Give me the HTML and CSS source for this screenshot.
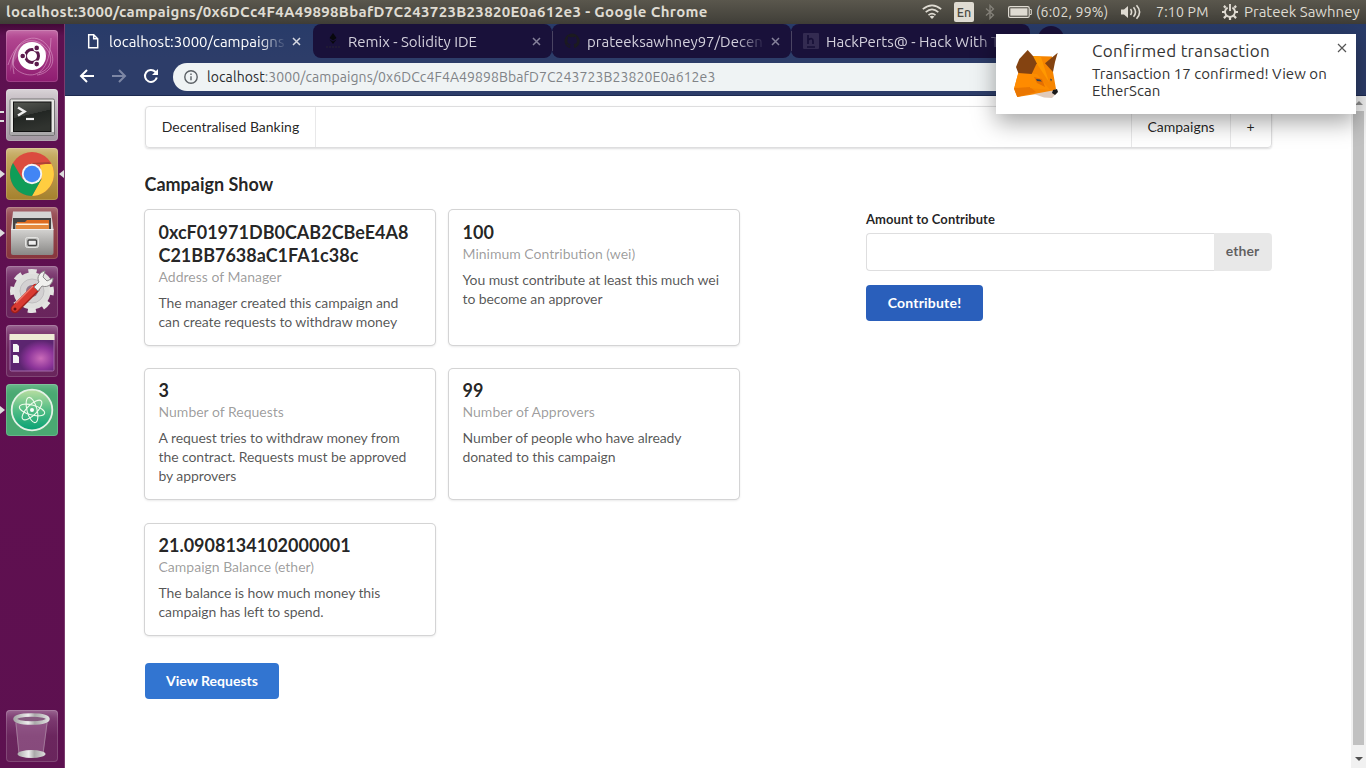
FILE: index.html
```html
<!DOCTYPE html>
<html lang="en">
<head>
<meta charset="utf-8">
<title>Campaign Show</title>
<link rel="stylesheet" href="styles.css">
</head>
<body>
<div class="desktop">
  <header class="panel">
    <span class="window-title">localhost:3000/campaigns/0x6DCc4F4A49898BbafD7C243723B23820E0a612e3 - Google Chrome</span>
    <div class="indicators">
      <svg class="wifi" width="20" height="16" viewBox="0 0 20 16" fill="none" stroke="#dfdbd2" stroke-width="1.6"><path d="M.8 5.2Q10-2.6 19.2 5.2M3.7 8.2Q10 2.6 16.3 8.2M6.5 11.1Q10 8 13.5 11.1"/><path d="M7.6 12.6Q10 10.8 12.4 12.6L10 15z" fill="#dfdbd2" stroke="none"/></svg>
      <span class="lang">En</span>
      <svg class="bt" width="10" height="16" viewBox="0 0 10 16" fill="none" stroke="#85827a" stroke-width="1.3"><path d="M1 4.5 8.5 11 5 14.5V1.5L8.5 5 1 11.5"/></svg>
      <svg class="battery" width="24" height="12" viewBox="0 0 24 12"><rect x=".6" y=".6" width="20.6" height="10.8" rx="1.5" fill="none" stroke="#dfdbd2" stroke-width="1.2"/><rect x="2.3" y="2.3" width="17.2" height="7.4" fill="#dfdbd2"/><path d="M22 3.5h1.3v5H22" fill="none" stroke="#dfdbd2"/></svg>
      <span class="charge">(6:02, 99%)</span>
      <svg class="sound" width="20" height="16" viewBox="0 0 20 16"><path d="M0 5.5h3L7 2v12l-4-3.500H0z" fill="#dfdbd2"/><path d="M9.500 5q2.200 3 0 6M12.500 3.200q4 4.800 0 9.600M15.500 1.200q6.200 6.800 0 13.600" fill="none" stroke="#dfdbd2" stroke-width="1.600"/></svg>
      <span class="clock">7:10 PM</span>
      <svg class="gear" width="16" height="16" viewBox="0 0 16 16" fill="none" stroke="#dfdbd2"><path d="M5.600 3.600a5 5 0 1 0 4.800 0" stroke-width="1.900"/><path d="M8 0v7" stroke-width="1.900"/><path d="M3.600 3.600 1.900 1.900M12.400 3.600l1.700-1.700M3 8H0M13 8h3M4.500 11.500l-2.600 2.600M11.500 11.500l2.600 2.600M8 13v3" stroke-width="2.200"/></svg>
      <span class="user">Prateek Sawhney</span>
    </div>
  </header>

  <div class="workspace">
    <aside class="launcher">
      <div class="tile tile-dash"><svg width="52" height="52" viewBox="0 0 52 52"><g fill="none" stroke="#e0a8cd" stroke-opacity=".55"><path d="M8 44C2 14 24 4 37 15s8 25-4 28"/><path d="M45 8C44 42 30 49 16 43S6 25 14 14"/><path d="M2 35C12 4 33 2 43 18s-2 26-12 27"/></g><path d="M4 42C4 10 38 0 42 27 30 5 12 18 4 42" fill="#fff" opacity=".15"/><circle cx="26" cy="26" r="14" fill="#fff"/><circle cx="26" cy="26" r="6.500" fill="none" stroke="#5b1a4c" stroke-width="3"/><g stroke="#fff" stroke-width="1.200"><circle cx="16.700" cy="26" r="2.900" fill="#5b1a4c"/><circle cx="30.700" cy="17.900" r="2.900" fill="#5b1a4c"/><circle cx="30.700" cy="34.100" r="2.900" fill="#5b1a4c"/></g></svg></div>
      <div class="tile tile-terminal running-two"><svg width="52" height="52" viewBox="0 0 52 52"><defs><linearGradient id="tg" x2=".3" y2="1"><stop stop-color="#555852"/><stop offset=".5" stop-color="#363936"/><stop offset=".51" stop-color="#222623"/><stop offset="1" stop-color="#30332f"/></linearGradient></defs><rect x="4" y="10" width="44.500" height="36.500" rx="1.500" fill="#e7e7e4" stroke="#747274"/><path d="M4.500 43h43.500v3H4.500z" fill="#aaa8aa"/><rect x="7.500" y="13" width="37.500" height="29.500" fill="url(#tg)" stroke="#111"/><path d="m12 18.500 6.500 4-6.500 4" fill="none" stroke="#eee" stroke-width="2.500"/><path d="M20 30h8" stroke="#eee" stroke-width="2.200"/></svg></div>
      <div class="tile tile-chrome running focused"><svg width="52" height="52" viewBox="0 0 52 52"><circle cx="26" cy="26" r="22" fill="#db4c3f"/><path d="M45 15A22 22 0 0 1 26 48L35.500 31 34 17z" fill="#ffcd40"/><path d="M7 15A22 22 0 0 0 26 48L35.500 31 26 36 16.500 31z" fill="#0f9d58"/><path d="M26 16H45.600L43 14 26 15z" fill="#ac4336"/><circle cx="26" cy="26" r="10.200" fill="#f4f4f4"/><circle cx="26" cy="26" r="8.300" fill="#4285f4"/></svg></div>
      <div class="tile tile-files running"><svg width="52" height="52" viewBox="0 0 52 52"><defs><linearGradient id="fg" x2="0" y2="1"><stop stop-color="#d3d2d0"/><stop offset="1" stop-color="#898886"/></linearGradient></defs><path d="M7 4.500h38l2.500 18H5z" fill="#d5d4d3"/><rect x="7" y="11" width="38" height="17" fill="#444"/><path d="M11 15h8l2-2h22v10H10z" fill="#df6c20"/><path d="M9.500 16.500h33v8h-33z" fill="#fff3df"/><path d="M10 18h33v7H10z" fill="#e58a3e"/><path d="M5 22.500h42.500V46q0 2-2 2H7q-2 0-2-2z" fill="url(#fg)"/><path d="M5 22.500h42.500" stroke="#eee"/><rect x="19.500" y="30.500" width="13" height="10" rx="2" fill="#c4c4c2" stroke="#e5e5e3"/><rect x="22" y="33" width="8.500" height="5.500" rx="1" fill="#eee" stroke="#444" stroke-width="1.300"/></svg></div>
      <div class="tile tile-settings"><svg width="52" height="52" viewBox="0 0 52 52"><circle cx="26" cy="25" r="14" fill="none" stroke="#dededc" stroke-width="9"/><circle cx="26" cy="25" r="19.500" fill="none" stroke="#e3e3e1" stroke-width="5" stroke-dasharray="8 7.315" transform="rotate(-12 26 25)"/><circle cx="26" cy="25" r="12" fill="#d3d1d2" stroke="#c0bec0"/><circle cx="26" cy="25" r="6" fill="#8d7187"/><path d="M30 22 9 43" stroke="#9f1f1a" stroke-width="8.500" stroke-linecap="round"/><path d="M30 21.500 9 42.500" stroke="#d93a31" stroke-width="6.500" stroke-linecap="round"/><path d="M27 20 10 37" stroke="#ef766b" stroke-width="1.500"/><path d="m28 21 5-5c-3-5 1-10 6-11l-2 6 4 4 6-3c0 6-5 10-11 8l-4 5z" fill="#f1f1ef" stroke="#8b898a"/><circle cx="9" cy="43" r="1.500" fill="#611"/></svg></div>
      <div class="tile tile-workspace"><svg width="52" height="52" viewBox="0 0 52 52"><defs><radialGradient id="wg" cx=".7" cy=".65"><stop stop-color="#ca6bb9"/><stop offset=".6" stop-color="#8c3499"/><stop offset="1" stop-color="#5c2570"/></radialGradient></defs><rect x="4" y="10" width="44" height="36" rx="1.500" fill="url(#wg)" stroke="#a46ca9"/><path d="M3.500 9h45v6h-45z" fill="#eeebd5"/><path d="M7 19h4l2 2v6H7zM7 30h4l2 2v6H7z" fill="#f5f5f5"/></svg></div>
      <div class="tile tile-atom running"><svg width="52" height="52" viewBox="0 0 52 52"><defs><linearGradient id="ag" x2="0" y2="1"><stop stop-color="#b9dea1"/><stop offset=".5" stop-color="#53bd85"/><stop offset="1" stop-color="#06a174"/></linearGradient></defs><circle cx="26" cy="26" r="20.300" fill="url(#ag)" stroke="#e4f2e6" stroke-width="1.800"/><g fill="none" stroke="#effbec" stroke-width="1.100"><ellipse cx="26" cy="26" rx="13" ry="5" transform="rotate(15 26 26)"/><ellipse cx="26" cy="26" rx="13" ry="5" transform="rotate(75 26 26)"/><ellipse cx="26" cy="26" rx="13" ry="5" transform="rotate(135 26 26)"/></g><circle cx="26" cy="26" r="2" fill="#fff"/></svg></div>
      <div class="tile tile-trash"><svg width="52" height="52" viewBox="0 0 52 52"><defs><linearGradient id="bg" x2="1" y2="0"><stop stop-color="#aaa"/><stop offset=".4" stop-color="#eee"/><stop offset=".6" stop-color="#aaa"/><stop offset="1" stop-color="#ddd"/></linearGradient></defs><path d="M9 10 13 45Q26 50 37 45L42 10z" fill="#b889b1" opacity=".38"/><path d="M10 13 13 44M41 13l-4 31" stroke="#a985a2" stroke-width=".8"/><ellipse cx="25.500" cy="44" rx="14" ry="4" fill="url(#bg)"/><ellipse cx="25.500" cy="9" rx="16.500" ry="4" fill="#865b7f" stroke="url(#bg)" stroke-width="3.500"/></svg></div>
    </aside>

    <section class="browser">
      <div class="tabstrip">
        <div class="tab tab-active"><svg class="favicon" width="20" height="16" viewBox="0 0 20 16" fill="none" stroke="#fff" stroke-width="1.500"><path d="M5.700 1.700h5l4 4v9h-9zM10.700 1.700v4h4"/></svg><span class="tab-title">localhost:3000/campaigns</span><svg class="close" width="9" height="9" viewBox="0 0 9 9"><path d="m1 1 7 7m0-7-7 7"/></svg></div>
        <div class="tab"><svg class="favicon" width="16" height="16" viewBox="0 0 16 16" fill="#08080d"><path d="m8 0 3.500 5L8 7.500 4.500 5zM8 11 4.500 6.500 8 8.500l3.500-2z"/><path d="M1 14h14" stroke="#292431" stroke-dasharray="2 1"/></svg><span class="tab-title">Remix - Solidity IDE</span><svg class="close" width="9" height="9" viewBox="0 0 9 9"><path d="m1 1 7 7m0-7-7 7"/></svg></div>
        <div class="tab"><svg class="favicon" width="16" height="16" viewBox="0 0 16 16"><path fill="#1b1a20" fill-rule="evenodd" d="M8 .500a7.500 7.500 0 0 0-2.400 14.600c.4.100.5-.2.500-.4v-1.400c-2.100.5-2.500-.9-2.500-.9-.3-.9-.8-1.100-.8-1.100-.7-.5 0-.5 0-.5.800.1 1.200.8 1.200.8.700 1.200 1.800.8 2.200.6.100-.5.300-.8.500-1-1.700-.2-3.400-.8-3.400-3.700 0-.8.300-1.500.8-2-.1-.2-.300-1 .1-2 0 0 .6-.2 2.100.8a7 7 0 0 1 3.800 0c1.400-1 2-.8 2-.8.400 1 .200 1.800.1 2 .5.500.8 1.200.8 2 0 2.900-1.800 3.500-3.400 3.700.3.200.5.700.5 1.400v2.100c0 .2.100.5.500.4A7.500 7.500 0 0 0 8 .500z"/></svg><span class="tab-title">prateeksawhney97/Decen</span><svg class="close" width="9" height="9" viewBox="0 0 9 9"><path d="m1 1 7 7m0-7-7 7"/></svg></div>
        <div class="tab"><svg class="favicon" width="16" height="16" viewBox="0 0 16 16"><rect width="16" height="16" rx="1" fill="#332b51"/><path d="M5 2v9m0-4q5-3 5 1v3M4 14h8" fill="none" stroke="#171037" stroke-width="1.700"/></svg><span class="tab-title">HackPerts@ - Hack With T</span></div>
        <i class="newtab"></i>
      </div>
      <div class="toolbar">
        <svg class="nav-icon" width="16" height="16" viewBox="0 0 16 16"><path d="M15 8H2m6-6L2 8l6 6" stroke="#fff"/></svg>
        <svg class="nav-icon" width="16" height="16" viewBox="0 0 16 16"><path d="M1 8h13M8 2l6 6-6 6" stroke="#7d87a5"/></svg>
        <svg class="nav-icon" width="16" height="16" viewBox="0 0 16 16"><path d="M13.800 9.500A6 6 0 1 1 12.300 3.700L14 5.500" stroke="#fff"/><path d="M15 1v6H9z" fill="#fff"/></svg>
        <div class="omnibox"><svg width="14" height="14" viewBox="0 0 14 14" fill="none" stroke="#5b6065" stroke-width="1.400"><circle cx="7" cy="7" r="6.200"/><path d="M7 6.200v4M7 3.500v1.500"/></svg><span class="url"><b>localhost</b>:3000/campaigns/0x6DCc4F4A49898BbafD7C243723B23820E0a612e3</span></div>
      </div>

      <div class="viewport">
        <main class="page">
          <nav class="menu"><a class="item brand">Decentralised Banking</a><a class="item campaigns">Campaigns</a><a class="item plus">+</a></nav>
          <h3 class="heading">Campaign Show</h3>
          <div class="columns">
            <div class="cards">
              <article class="card first"><h4>0xcF01971DB0CAB2CBeE4A8<br>C21BB7638aC1FA1c38c</h4><div class="meta">Address of Manager</div><p>The manager created this campaign and can create requests to withdraw money</p></article>
              <article class="card first"><h4>100</h4><div class="meta">Minimum Contribution (wei)</div><p>You must contribute at least this much wei to become an approver</p></article>
              <article class="card second"><h4>3</h4><div class="meta">Number of Requests</div><p>A request tries to withdraw money from the contract. Requests must be approved by approvers</p></article>
              <article class="card second"><h4>99</h4><div class="meta">Number of Approvers</div><p>Number of people who have already donated to this campaign</p></article>
              <article class="card third"><h4>21.0908134102000001</h4><div class="meta">Campaign Balance (ether)</div><p>The balance is how much money this campaign has left to spend.</p></article>
            </div>
            <form class="contribute">
              <label for="amount">Amount to Contribute</label>
              <div class="field"><input id="amount" type="text"><span class="unit">ether</span></div>
              <button type="button" class="button button-pressed">Contribute!</button>
            </form>
          </div>
          <button type="button" class="button view">View Requests</button>
        </main>
        <div class="scrollbar"><i class="up"></i><i class="thumb"></i><i class="down"></i></div>
      </div>
    </section>
  </div>

  <div class="toast">
    <svg class="fox" width="44" height="48" viewBox="0 0 44 48"><path d="m19 6 19 .5L39 22l3 17-6 4-14 1-18.700 3L0 39l4.300-16z" fill="#f68500"/><path d="M4.300 23h15L16 38 0 39z" fill="#ff8b00"/><path d="m0 38 16-1 6 5-18.700 5z" fill="#ea7600"/><path d="m19 6 8 1 8 25-12-18z" fill="#ff9800"/><path d="M17 24h6l13 16-20-2z" fill="#fb8c00"/><path d="m20 27 8 2 3 8-8-4z" fill="#e56f00"/><path d="M13.700 0 19 6l3.700 7.300-5 10.700-13.400-1L2 17l3.300-8z" fill="#844311"/><path d="M43.700 2.700 31 13.300 39 22l2-10z" fill="#844311"/><path d="m20 44 16-3 6-1 1 3-5 5-8-.5z" fill="#dfcabb"/><path d="m22 29 4 .5 2 2-5-.5zM36 28.500l2 1-1 2z" fill="#344251"/><path d="m39 40 4-1 1 3-3 3-3-2z" fill="#191919"/></svg>
    <div class="toast-text"><div class="toast-title">Confirmed transaction</div><div class="toast-body">Transaction 17 confirmed! View on<br>EtherScan</div></div>
    <svg class="toast-close" width="10" height="10" viewBox="0 0 10 10"><path d="m1 1 8 8m0-8-8 8" stroke="#555" stroke-width="1.200"/></svg>
  </div>
</div>
</body>
</html>
```
FILE: styles.css
```css
* { box-sizing: border-box; }
body { margin: 0; width: 1366px; height: 768px; overflow: hidden; font-family: Lato, sans-serif; font-size: 14px; }
svg { display: block; flex: none; }
.desktop { position: relative; height: 768px; display: flex; flex-direction: column; }
.panel, .tabstrip, .toolbar, .toast { font-family: Ubuntu, "Noto Sans", sans-serif; white-space: nowrap; }
.panel { height: 24px; flex: none; display: flex; justify-content: space-between; align-items: center; padding: 0 5px 0 6px; background: linear-gradient(#5a574d, #45433c 80%, #3e3c36); color: #dfdbd2; font-size: 14px; line-height: 24px; }
.window-title { font-size: 15px; font-weight: bold; letter-spacing: .34px; }
.indicators { display: flex; align-items: center; width: 439px; }
.lang { width: 20px; height: 20px; margin: 0 11px 0 12px; border-radius: 2px; background: #dfdbd2; color: #4b4942; font-size: 12.500px; font-weight: 500; line-height: 20px; text-align: center; }
.bt { margin-right: 13px; }
.charge { width: 73px; margin-left: 4px; letter-spacing: .2px; }
.sound { margin: 0 15px 0 12px; }
.clock { width: 53px; letter-spacing: .25px; }
.gear { margin: 0 6px 0 13px; }
.user { font-size: 15px; }
.workspace { flex: 1; display: flex; min-height: 0; }
.launcher { width: 65px; flex: none; display: flex; flex-direction: column; gap: 7px; padding: 6px 0 6px 6px; border-right: 1px solid #7b3b6e; background: linear-gradient(#430838, #5d1150 12px, #600f50 50%, #5d1150); }
.tile { position: relative; width: 52px; height: 52px; border-radius: 4px; box-shadow: inset 0 0 0 1px #ffffff28, inset 0 9px 10px -8px #ffffff50; }
.tile-dash { background: linear-gradient(#b84e96, #8e1c70); }
.tile-terminal { background: linear-gradient(#d2cbd0, #a297a1); }
.tile-chrome { background: linear-gradient(#cab069, #a5812d); }
.tile-files { background: linear-gradient(#9b535a, #87353c); }
.tile-settings, .tile-workspace, .tile-trash { background: linear-gradient(#85457a, #6b265e 50%, #69255c); }
.tile-atom { background: #4aa972; }
.tile-trash { margin-top: auto; }
.running::before { content: ""; position: absolute; left: -6px; top: 22px; border: 4px solid transparent; border-left: 5px solid #ddd; border-right: 0; }
.running-two::before { content: ""; position: absolute; left: -6px; top: 22px; width: 4px; height: 7px; border: solid #ddd; border-width: 2px 0; }
.focused::after { content: ""; position: absolute; right: -6px; top: 22px; border: 4px solid transparent; border-right: 5px solid #ddd; border-left: 0; }
.browser { flex: 1; min-width: 0; display: flex; flex-direction: column; background: #2d3d69; }
.tabstrip { height: 34px; display: flex; background: linear-gradient(#283b69, #2d3d69); }
.tab { width: 239px; height: 34px; flex: none; display: flex; align-items: center; padding-left: 12px; border-radius: 8px; background: #19113a; color: #d3d0dc; font-size: 15px; }
.tab + .tab + .tab { background: linear-gradient(#4a4462, #4a4462) 0 7px / 1px 20px no-repeat #19113a; }
.tab-active { width: 248px; padding-left: 18px; background: transparent; color: #fff; }
.tab-title { width: 177px; margin: 0 7px 0 7px; mask-image: linear-gradient(90deg, #000 150px, transparent 178px); }
.tab-active .tab-title { margin: 0 6px 0 6px; }
.close { stroke: #85819a; stroke-width: 1.5; }
.tab-active .close { stroke: #d5d8e1; }
.newtab { width: 26px; height: 26px; margin: 2px 0 0 8px; border-radius: 50%; background: #19113a; }
.toolbar { height: 38px; flex: none; display: flex; align-items: center; gap: 16px; padding: 0 0 1px 14px; border-bottom: 1px solid #1d2a50; }
.nav-icon path { stroke-width: 2; fill: none; }
.nav-icon path[fill] { fill: #fff; stroke: none; }
.omnibox { flex: 1; height: 28px; margin: 2px 180px 0 -2px; padding-left: 11px; border-radius: 14px; display: flex; align-items: center; gap: 9px; background: #eff3f4; color: #808387; font-size: 14px; letter-spacing: .09px; }
.url b { font-weight: normal; color: #292a2d; }
.viewport { flex: 1; min-height: 0; display: flex; background: #fff; }
.page { flex: 1; padding: 10px 79px 0 80px; color: rgba(0,0,0,.87); }
.menu { height: 42px; display: flex; border: 1px solid #dededf; border-radius: 4px; box-shadow: 0 1px 2px rgba(34,36,38,.15); }
.item { display: flex; align-items: center; justify-content: center; line-height: 14px; }
.brand { width: 170px; margin-right: auto; border-right: 1px solid #e8e8e9; }
.campaigns { width: 99px; border-left: 1px solid #e8e8e9; }
.plus { width: 41px; padding-right: 1px; border-left: 1px solid #e8e8e9; }
.heading { margin: 25px 0 14px -.5px; font-size: 18px; line-height: 23px; }
.columns { display: flex; justify-content: space-between; }
.cards { width: 610px; display: flex; flex-wrap: wrap; gap: 24px 14px; align-content: flex-start; }
.card { width: 290px; padding: 11px 13.500px; border-radius: 4px; box-shadow: 0 1px 3px 0 #d4d4d5, 0 0 0 1px #d4d4d5; }
.first { height: 135px; }
.second { height: 130px; padding-top: 10px; }
.third { height: 111px; margin-top: 1px; padding-top: 10px; }
.card h4 { margin: 0; font-size: 18px; line-height: 23px; }
.meta { color: rgba(0,0,0,.4); line-height: 20px; }
.card p { margin: 6px -8px 0 0; width: 262px; color: rgba(0,0,0,.68); line-height: 19px; letter-spacing: -.09px; }
.contribute { width: 406px; }
.contribute label { display: block; font-size: 13px; font-weight: bold; line-height: 18px; margin-bottom: 5px; letter-spacing: .05px; }
.field { display: flex; height: 38px; margin-bottom: 14px; }
.field input { flex: 1; min-width: 0; border: 1px solid #dededf; border-right: 0; border-radius: 4px 0 0 4px; background: #fff; }
.unit { width: 58px; padding-right: 1px; border-radius: 0 4px 4px 0; background: #e8e8e8; color: rgba(0,0,0,.6); font-weight: bold; line-height: 36px; text-align: center; letter-spacing: .1px; }
.button { display: block; height: 36px; padding: 0 0 1px; border: 0; border-radius: 4px; font: bold 14px Lato, sans-serif; color: #fff; background: #3275d1; }
.button-pressed { width: 117px; background: #2a5fbb; letter-spacing: .2px; }
.view { width: 134px; margin-top: 28px; }
.scrollbar { width: 15px; flex: none; display: flex; flex-direction: column; align-items: center; background: #f1f1f1; padding: 5px 0; }
.up { border: 4px solid transparent; border-top: 0; border-bottom-color: #8d8d8d; margin-bottom: 6px; }
.thumb { width: 11px; flex: 1; background: #c1c1c1; margin-bottom: 12px; }
.down { border: 4px solid transparent; border-bottom: 0; border-top-color: #505050; margin-bottom: 2px; }
.toast { position: absolute; left: 996px; top: 34px; width: 360px; height: 80px; display: flex; background: #fff; color: #333; box-shadow: 0 8px 22px rgba(0,0,0,.36); }
.fox { margin: 16px 34px 0 18px; }
.toast-text { flex: 1; padding-top: 6px; }
.toast-title { font-size: 17px; line-height: 22px; letter-spacing: .3px; }
.toast-body { margin-top: 3px; font-size: 15px; line-height: 17px; letter-spacing: .04px; }
.toast-close { margin: 9px 9px 0 0; }
```
